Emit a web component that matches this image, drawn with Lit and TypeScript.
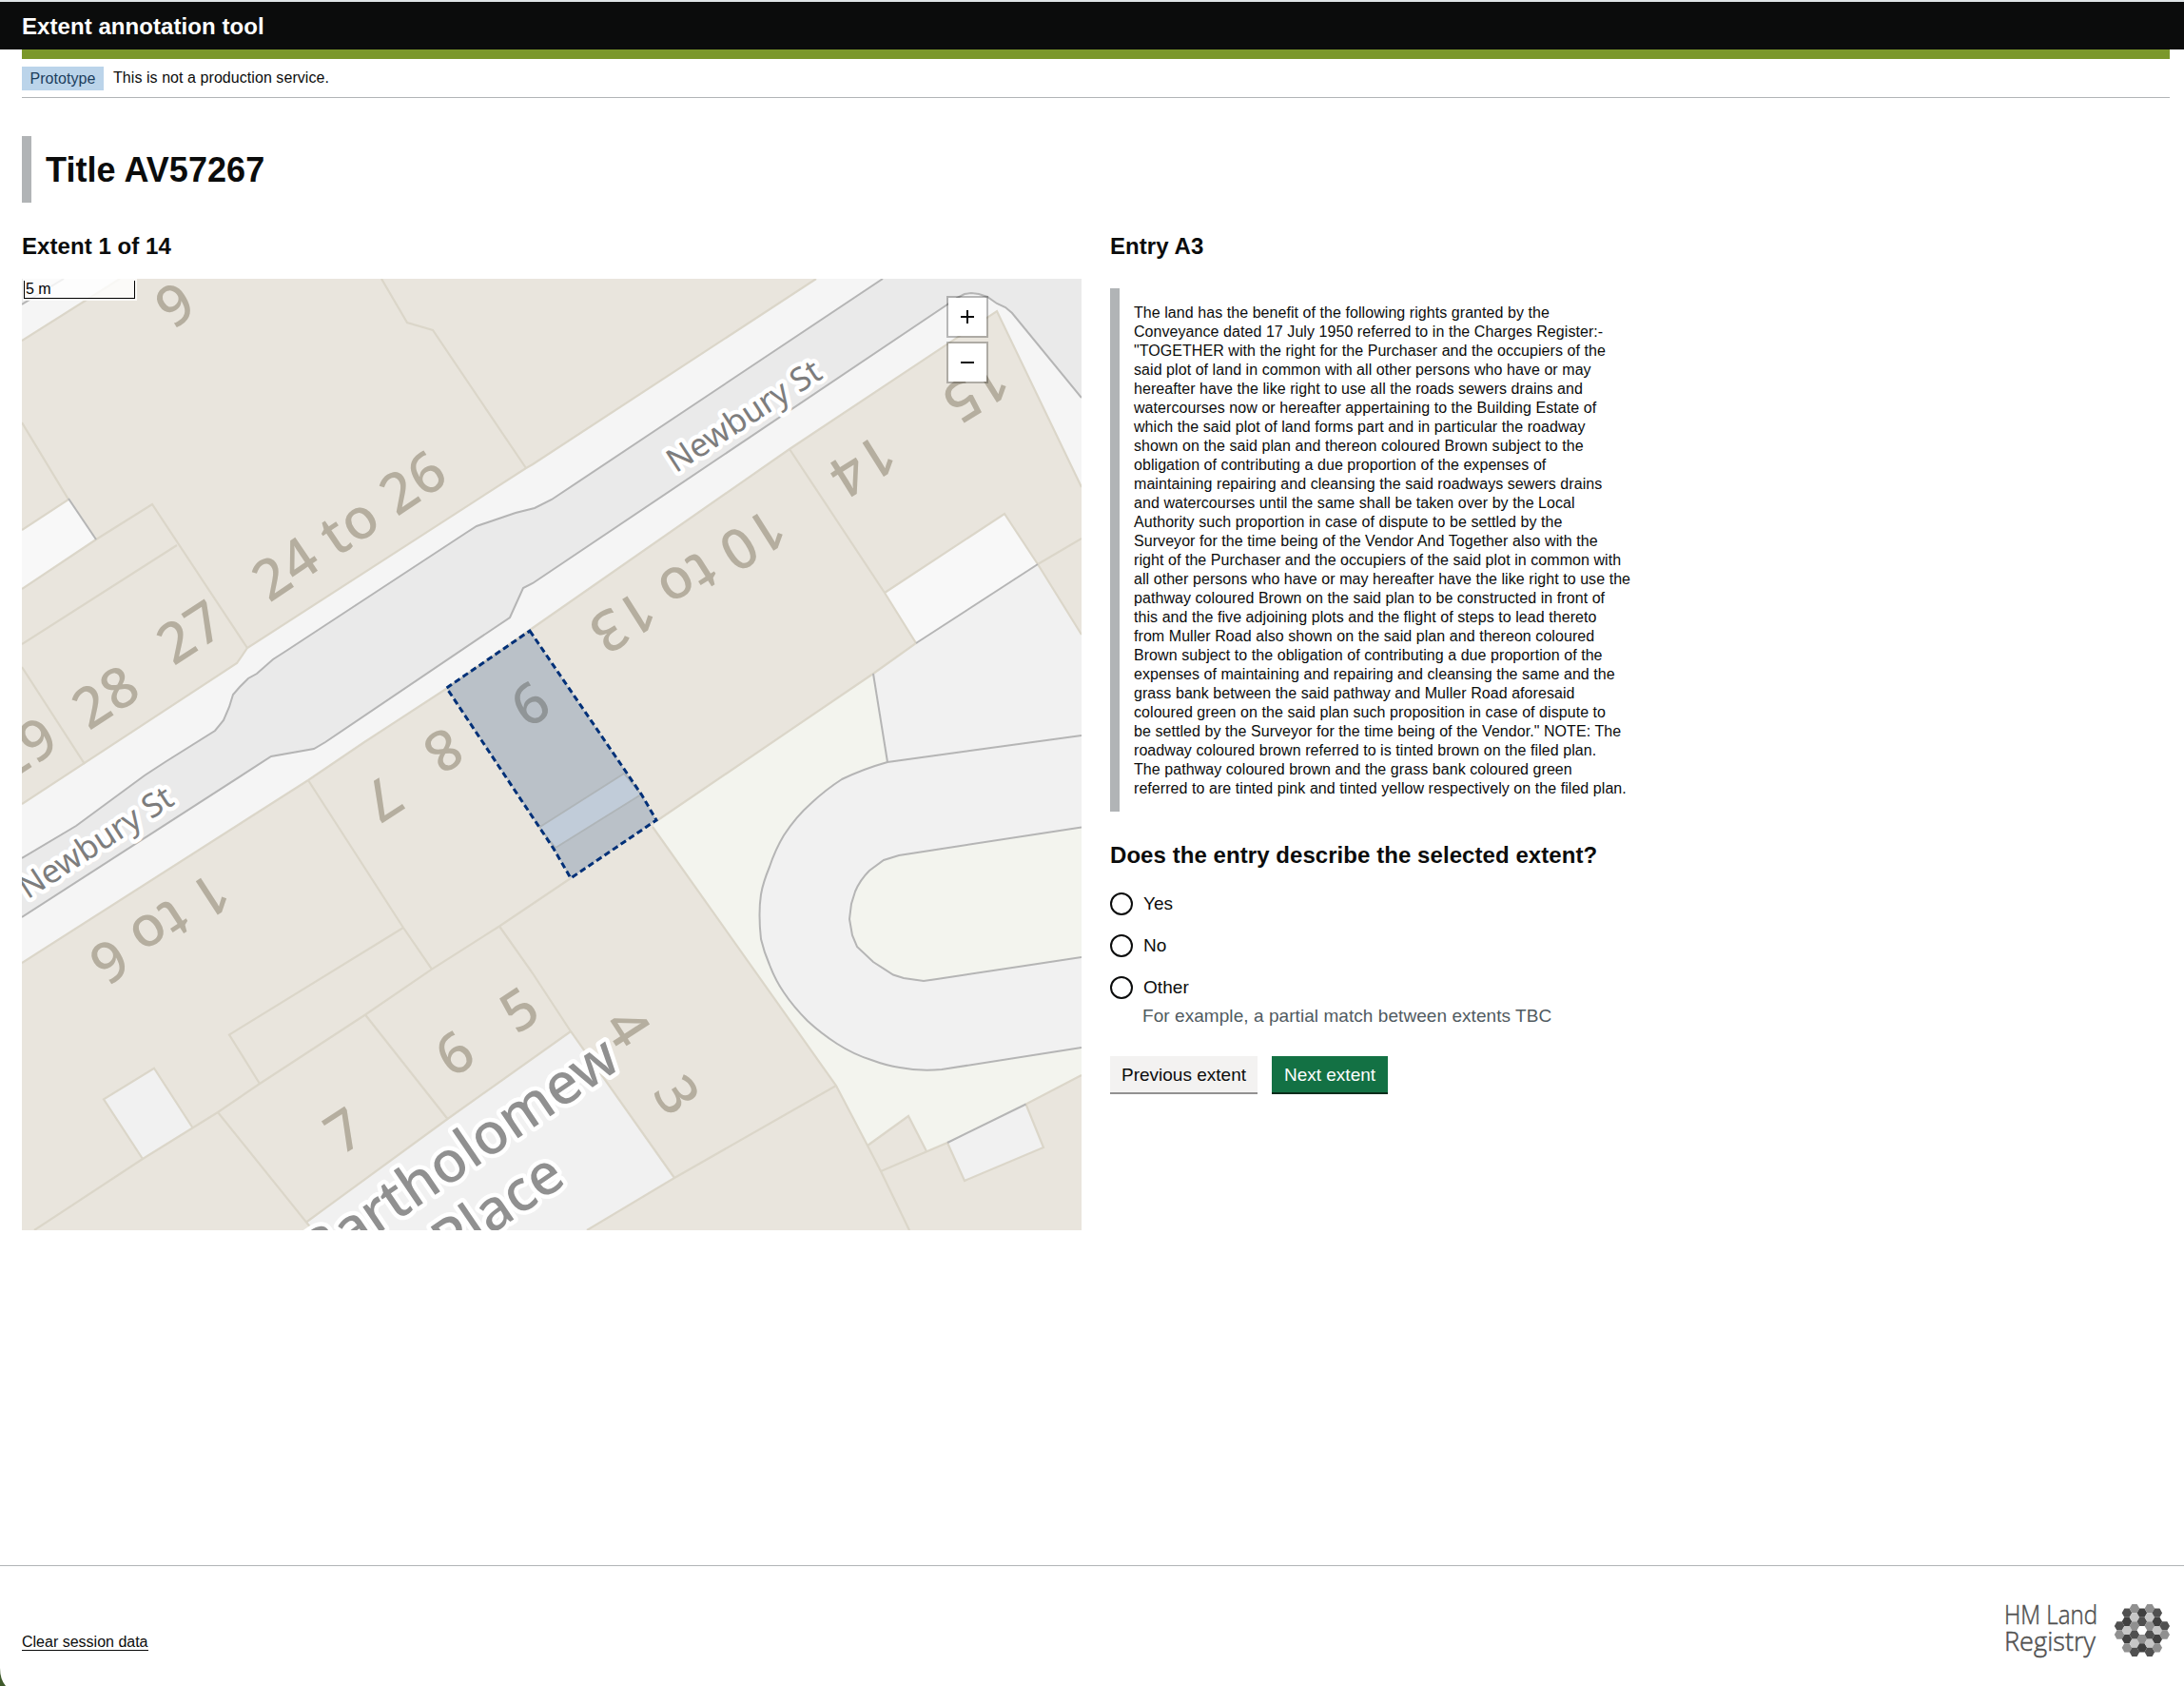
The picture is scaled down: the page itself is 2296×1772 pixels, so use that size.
import { LitElement, html, svg, css } from "lit";
import { customElement, state } from "lit/decorators.js";

type Pts = string;

const FOOTWAY: Pts[] = [
  "23,845 249,697 260,681 553,492 560,488 858,293 1137,293 1137,512 1048,327 830,472 560,660 469,724 383,780 324,820 23,1012",
  "23,293 126,293 23,358",
];
const CARRIAGEWAY: Pts[] = [
  "23,902 80,868 152,815 175,800 226,768 235,757 241,743 245,730 252,722 261,713 270,708 287,693 301,684 490,560 501,553 542,539 562,534 580,525 928,293 1137,293 1137,418 1064,329 1057,323 1048,319 1038,312 1029,309 1021,308 1014,309 1006,313 996,320 560,613 550,618 536,649 342,780 330,787 285,795 23,964",
  "23,293 67,293 23,320",
];
const PALE: Pts[] = ["23,557 72,525 101,567 23,619", "930,623 1056,540 1091,593 963,676"];
const GREEN = "918,708 690,863 686,869 879,1141 912,1204 955,1173 974,1210 996,1201 1078.5,1160.5 1137,1130 1137,700";
const YARDS: Pts[] = [
  "963,676 1091,593 1137,667 1137,800 933,801 918,708",
  "322,1284.5 470.5,1176 600,1084 709,1238 617,1293 327,1293",
  "162,1122.7 203,1186 150,1218 109,1155.4",
  "996,1201 1078.5,1160.5 1097,1206 1014,1241",
];
const LOOP_OUTER =
  "M1137,773 L933,801 Q908,808 885,819 Q868,830 853,844 Q837,858 824,878 Q815,893 809,911 Q802,928 800,940 Q797,960 800,987 Q803,1000 809,1014 Q815,1030 824,1043 Q834,1058 849,1073 Q863,1086 880,1097 Q897,1108 916,1114 Q932,1120 946,1122 Q966,1126 990,1124 L1137,1101";
const LOOP_INNER =
  "M1137,869.5 L958,897 L945,899 L929,904 L914,915 Q904,925 899,937 L895,950 L893,966 L896,983 L901,995 L918,1011 L939,1024.5 L950,1028 L971,1031 L985,1029 L1137,1006";
const PARCELS: Pts[] = [
  "23,358 126,293",
  "23,444 72,525 23,557",
  "23,619 101,567 160,530 260,681",
  "186,573 23,677",
  "23,701 89,803",
  "23,845 249,697 260,681 553,492 560,488 858,293",
  "401,293 428,339 455,347 553,492",
  "23,1012 324,820 383,780 469,724 560,660 830,472 1048,327 1137,512",
  "830,472 930,623 963,676 918,708 690,863",
  "930,623 1056,540 1091,593 1137,667",
  "1091,593 1137,566",
  "686,869 879,1141 912,1204 926,1231 956,1293",
  "912,1204 955,1173 974,1210",
  "926,1231 996,1201 1014,1241 1097,1206 1078.5,1160.5 1137,1130",
  "879,1141 709,1238 617,1293",
  "709,1238 600,1084 560,1023 525,973.5",
  "600,1084 470.5,1176 322,1284.5",
  "600,923 525,973.5 454,1018.6 384,1066.5 273,1139 229,1169 150,1218 36,1293",
  "384,1066.5 470.5,1176",
  "229,1169 322,1284.5 329,1293",
  "324,820 424,975 454,1018.6",
  "424,975 241,1087.5 273,1139",
  "203,1186 162,1122.7 109,1155.4 150,1218",
];
const KERBS: Pts[] = [
  "23,902 80,868 152,815 175,800 226,768 235,757 241,743 245,730 252,722 261,713 270,708 287,693 301,684 490,560 501,553 542,539 562,534 580,525 928,293",
  "23,964 285,795 330,787 342,780 536,649 550,618 560,613 996,320 1006,313 1014,309 1021,308 1029,309 1038,312 1048,319 1057,323 1064,329 1137,418",
  "23,320 67,293",
  "72,524 101,567",
  "963,676 1091,593",
  "918,708 933,801",
  "996,1201 1078.5,1160.5",
];
const NUMBERS: [string, number, number, number][] = [
  ["9", 184, 320, -33],
  ["24 to 26", 367, 552, -34],
  ["27", 200, 664, -33],
  ["28", 111, 732, -33],
  ["29", 25, 786.5, -33],
  ["9", 557, 740, 147],
  ["8", 466, 789, 147],
  ["7", 402, 840, 147],
  ["10 to 13", 723, 611, 147.7],
  ["14", 907, 490, 148],
  ["15", 1026, 412, 148],
  ["1 to 6", 168, 976, 147],
  ["6", 478, 1107, -33],
  ["5", 546, 1061, -33],
  ["7", 362, 1188, -33],
  ["4", 660, 1080, 57],
  ["3", 712, 1151, 57],
];

@customElement("extent-map")
class ExtentMap extends LitElement {
  static styles = css`
    :host { display: block; position: relative; height: 1000px; overflow: hidden; letter-spacing: 0; }
    svg.canvas { display: block; width: 100%; height: 100%; background: #e9e5dd; }
    .footway { fill: #f5f5f5; }
    .road { fill: #eaeaea; }
    .pale { fill: #f8f8f8; }
    .green { fill: #f3f4ee; }
    .yard { fill: #f1f1f1; }
    .parcel { fill: none; stroke: #dbd6c9; stroke-width: 2.2; }
    .kerb { fill: none; stroke: #b5b5b5; stroke-width: 2; }
    .num { font: 500 59px "Noto Sans", sans-serif; letter-spacing: 0.8px; fill: #b5ae9f; text-anchor: middle; }
    .street { font: 34.3px "Noto Sans", sans-serif; fill: #7d7d7d; text-anchor: middle; }
    .place { font: 500 60px "Noto Sans", sans-serif; fill: #909090; text-anchor: end; }
    .street, .place { stroke: #fff; stroke-width: 9px; stroke-linejoin: round; paint-order: stroke; }
    .strip { fill: #f2f3f2; stroke: #dbd6c9; stroke-width: 1.8; }
    .extent { fill: rgba(0, 48, 120, 0.2); stroke: #003078; stroke-width: 3; stroke-dasharray: 6.5 3.8; }
    .scale {
      position: absolute; left: 1px; top: 0; padding: 2px 2px 2px 1px;
      background: rgba(255, 255, 255, 0.8);
    }
    .bar {
      box-sizing: border-box; width: 117px; height: 19px; padding-left: 1px;
      border: 1px solid #000; border-top: 0; color: #000;
      font: 16px/17px "Liberation Sans", Arial, sans-serif;
    }
    .zoom { position: absolute; right: 98px; top: 18px; display: grid; gap: 4px; }
    .zoom button {
      width: 44px; height: 44px; padding: 0; border: 2px solid rgba(0, 0, 0, 0.25);
      background: #fff; background-clip: padding-box; display: grid; place-items: center;
    }
    .zoom svg { width: 14px; height: 14px; stroke: #0b0c0c; stroke-width: 2; }
  `;
  render() {
    return html`
      <svg class="canvas" viewBox="23 293 1114 1000">
        ${FOOTWAY.map((p) => svg`<polygon class="footway" points=${p} />`)}
        ${CARRIAGEWAY.map((p) => svg`<polygon class="road" points=${p} />`)}
        ${PALE.map((p) => svg`<polygon class="pale" points=${p} />`)}
        <polygon class="green" points=${GREEN} />
        ${YARDS.map((p) => svg`<polygon class="yard" points=${p} />`)}
        <path class="yard" d=${LOOP_OUTER + "Z"} />
        <path class="green" d=${LOOP_INNER + "Z"} />
        ${PARCELS.map((p) => svg`<polyline class="parcel" points=${p} />`)}
        ${KERBS.map((p) => svg`<polyline class="kerb" points=${p} />`)}
        <path class="kerb" d=${LOOP_OUTER} />
        <path class="kerb" d=${LOOP_INNER} />
        <polygon class="strip" points="656,813 674,835 584,891 567,869.5" />
        ${NUMBERS.map(
          ([t, x, y, a]) =>
            svg`<text class="num" transform="translate(${x} ${y}) rotate(${a})" dy="0.357em">${t}</text>`
        )}
        <text class="street" transform="translate(788.5 447) rotate(-33)">Newbury St</text>
        <text class="street" transform="translate(107 895) rotate(-33)">Newbury St</text>
        <text class="place" transform="translate(655 1121) rotate(-34.3)">Bartholomew</text>
        <text class="place" transform="translate(597 1243) rotate(-34.3)">Place</text>
        <polygon class="extent" points="557,663 675,836 690,862 600,923 582,892 469.5,723" />
      </svg>
      <div class="scale"><div class="bar">5 m</div></div>
      <div class="zoom">
        <button aria-label="Zoom in"><svg viewBox="0 0 14 14"><path d="M0 7H14M7 0V14" /></svg></button>
        <button aria-label="Zoom out"><svg viewBox="0 0 14 14"><path d="M0 7H14" /></svg></button>
      </div>
    `;
  }
}

const SHADES: Record<string, string> = { d: "#505050", k: "#404040", m: "#909090", l: "#c6c6c6", w: "#ffffff" };
// Columns of the honeycomb emblem: x, first y, shades from top to bottom.
const COMB: [number, number, string][] = [
  [5.3, 22.9, "dm"],
  [13.2, 9.2, "dklkm"],
  [21.2, 4.6, "mlmdld"],
  [29.1, 9.2, "kdwmk"],
  [37.1, 4.6, "mlmdld"],
  [45, 9.2, "dklkm"],
  [52.9, 22.9, "dm"],
];

@customElement("registry-logo")
class RegistryLogo extends LitElement {
  static styles = css`
    :host { display: block; letter-spacing: 0; }
    svg { display: block; }
    text { font: 300 28px "Open Sans", "Noto Sans", sans-serif; fill: #505050; stroke: #505050; stroke-width: 0.5; }
  `;
  render() {
    const hex = (x: number, y: number) =>
      [[-5.3, 0], [-2.65, -4.6], [2.65, -4.6], [5.3, 0], [2.65, 4.6], [-2.65, 4.6]]
        .map(([a, b]) => `${(x + a).toFixed(2)},${(y + b).toFixed(2)}`)
        .join(" ");
    return html`<svg width="173" height="60" viewBox="0 0 173 60" role="img">
      <text x="-1" y="21" textLength="98" lengthAdjust="spacingAndGlyphs">HM Land</text>
      <text x="-1" y="49" textLength="96" lengthAdjust="spacingAndGlyphs">Registry</text>
      <g transform="translate(114.8 0)">
        ${COMB.map(([x, y, s]) =>
          [...s].map((c, i) => svg`<polygon points=${hex(x, y + i * 9.15)} fill=${SHADES[c]} />`)
        )}
      </g>
    </svg>`;
  }
}

const ENTRY = [
  "The land has the benefit of the following rights granted by the",
  "Conveyance dated 17 July 1950 referred to in the Charges Register:-",
  '"TOGETHER with the right for the Purchaser and the occupiers of the',
  "said plot of land in common with all other persons who have or may",
  "hereafter have the like right to use all the roads sewers drains and",
  "watercourses now or hereafter appertaining to the Building Estate of",
  "which the said plot of land forms part and in particular the roadway",
  "shown on the said plan and thereon coloured Brown subject to the",
  "obligation of contributing a due proportion of the expenses of",
  "maintaining repairing and cleansing the said roadways sewers drains",
  "and watercourses until the same shall be taken over by the Local",
  "Authority such proportion in case of dispute to be settled by the",
  "Surveyor for the time being of the Vendor And Together also with the",
  "right of the Purchaser and the occupiers of the said plot in common with",
  "all other persons who have or may hereafter have the like right to use the",
  "pathway coloured Brown on the said plan to be constructed in front of",
  "this and the five adjoining plots and the flight of steps to lead thereto",
  "from Muller Road also shown on the said plan and thereon coloured",
  "Brown subject to the obligation of contributing a due proportion of the",
  "expenses of maintaining and repairing and cleansing the same and the",
  "grass bank between the said pathway and Muller Road aforesaid",
  "coloured green on the said plan such proposition in case of dispute to",
  'be settled by the Surveyor for the time being of the Vendor." NOTE: The',
  "roadway coloured brown referred to is tinted brown on the filed plan.",
  "The pathway coloured brown and the grass bank coloured green",
  "referred to are tinted pink and tinted yellow respectively on the filed plan.",
];

@customElement("app-root")
class AppRoot extends LitElement {
  @state() private answer = "";

  static styles = css`
    :host {
      display: flex; flex-direction: column; position: relative; box-sizing: border-box;
      height: 1772px; overflow: hidden; background: #fff; color: #0b0c0c;
      font-family: "Liberation Sans", Arial, sans-serif; letter-spacing: 0.06px;
    }
    h1, h2, p { margin: 0; }
    header { background: #0b0c0c; border-top: 2px solid #dfe5e7; height: 50px; padding: 0 23px; color: #fff;
      font-size: 24px; font-weight: 700; line-height: 52px; }
    .wrap { margin: 0 15px 0 23px; }
    .accent { height: 10px; background: #7b982b; }
    .phase { box-sizing: border-box; display: flex; align-items: center; gap: 10px; height: 41px; border-bottom: 1px solid #b1b4b6;
      font-size: 16px; line-height: 20px; }
    .tag { background: #bbd4ea; color: #1b3e5d; height: 25px; line-height: 25px; width: 86px; text-align: center; }
    .title { margin-top: 40px; border-left: 10px solid #b1b4b6; height: 70px; padding-left: 15px;
      font-size: 36px; line-height: 71px; font-weight: 700; }
    .columns { display: grid; grid-template-columns: 1fr 1fr; gap: 30px; margin-top: 30px; }
    h2 { font-size: 24px; height: 30px; line-height: 32px; font-weight: 700; }
    extent-map { margin-top: 20px; }
    .inset { margin-top: 30px; border-left: 10px solid #b1b4b6; padding: 16px 15px 14px; }
    .inset p { font-size: 16px; line-height: 20px; white-space: nowrap; }
    .question { margin-top: 30px; }
    .radios { margin-top: 25px; display: grid; gap: 20px; }
    .radio { display: flex; align-items: center; gap: 11px; height: 24px; font-size: 19px; }
    .dot { box-sizing: border-box; width: 24px; height: 24px; border: 2px solid #0b0c0c; border-radius: 50%; display: grid; place-items: center; }
    .dot.on::after { content: ""; width: 12px; height: 12px; border-radius: 50%; background: #0b0c0c; }
    .hint { margin: 5px 0 0 34px; font-size: 19px; line-height: 25px; color: #505a5f; }
    .buttons { display: flex; gap: 15px; margin-top: 30px; }
    .btn { box-sizing: border-box; height: 38px; border: 0; padding: 2px 0 0; font: 19px/36px "Liberation Sans", Arial, sans-serif; }
    .prev { width: 155px; background: #f3f2f1; color: #0b0c0c; box-shadow: 0 2px 0 #929191; }
    .next { width: 122px; background: #137144; color: #fff; box-shadow: 0 2px 0 #0b2d1b; }
    footer { margin-top: auto; box-sizing: border-box; height: 127px; border-top: 1px solid #b1b4b6;
      padding: 40px 15px 0 23px; display: flex; justify-content: space-between; }
    .clear { align-self: flex-start; margin-top: 31px; font-size: 16px; line-height: 17px; letter-spacing: 0;
      border-bottom: 1px solid #0b0c0c; color: inherit; text-decoration: none; }
    .corner { position: absolute; left: 0; bottom: 0; width: 6px; height: 19px; }
  `;

  render() {
    return html`
      <header>Extent annotation tool</header>
      <div class="wrap">
        <div class="accent"></div>
        <div class="phase"><span class="tag">Prototype</span><span>This is not a production service.</span></div>
        <h1 class="title">Title AV57267</h1>
        <div class="columns">
          <section>
            <h2>Extent 1 of 14</h2>
            <extent-map></extent-map>
          </section>
          <section>
            <h2>Entry A3</h2>
            <div class="inset"><p>${ENTRY.map((l, i) => (i ? html`<br />${l}` : l))}</p></div>
            <h2 class="question">Does the entry describe the selected extent?</h2>
            <div class="radios">
              ${["Yes", "No", "Other"].map(
                (o) => html`<div class="radio" @click=${() => (this.answer = o)}>
                  <span class="dot ${this.answer === o ? "on" : ""}"></span><span>${o}</span>
                </div>`
              )}
            </div>
            <p class="hint">For example, a partial match between extents TBC</p>
            <div class="buttons">
              <button class="btn prev">Previous extent</button>
              <button class="btn next">Next extent</button>
            </div>
          </section>
        </div>
      </div>
      <footer>
        <a class="clear" href="#">Clear session data</a>
        <registry-logo></registry-logo>
      </footer>
      <svg class="corner" viewBox="0 0 6 19"><path d="M0 0Q0 12 6 19H0Z" fill="#3f5a2b" /></svg>
    `;
  }
}
